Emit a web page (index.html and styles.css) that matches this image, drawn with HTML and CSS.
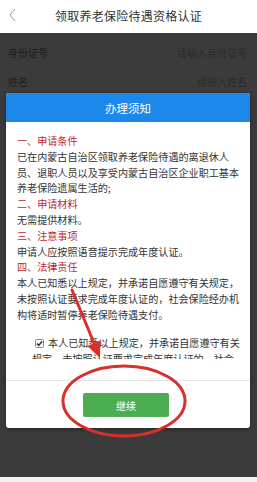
FILE: index.html
```html
<!DOCTYPE html>
<html lang="zh">
<head>
<meta charset="utf-8">
<link rel="stylesheet" href="styles.css">
</head>
<body>
<div class="page">
  <header class="topbar">
    <span class="back">
      <svg width="7" height="14" viewBox="0 0 7 14"><path d="M6 1 L1 7 L6 13" fill="none" stroke="#9a9a9a" stroke-width="1"/></svg>
    </span>
    <h1 class="title">领取养老保险待遇资格认证</h1>
    <span></span>
  </header>

  <main class="screen">
    <div class="row"><span class="label">身份证号</span><span class="ph">请输入身份证号</span></div>
    <div class="row"><span class="label">姓名</span><span class="ph">请输入姓名</span></div>

    <section class="modal">
      <div class="modal-head">办理须知</div>
      <div class="modal-body">
        <p class="h">一、申请条件</p>
        <p>已在内蒙古自治区领取养老保险待遇的离退休人<br>员、退职人员以及享受内蒙古自治区企业职工基本<br>养老保险遗属生活的;</p>
        <p class="h">二、申请材料</p>
        <p>无需提供材料。</p>
        <p class="h">三、注意事项</p>
        <p>申请人应按照语音提示完成年度认证。</p>
        <p class="h">四、法律责任</p>
        <p>本人已知悉以上规定，并承诺自愿遵守有关规定，<br>未按照认证要求完成年度认证的，社会保险经办机<br>构将适时暂停养老保险待遇支付。</p>
        <p class="agree"><span class="cb"><svg width="9" height="9" viewBox="0 0 9 9"><rect x="0.5" y="0.5" width="8" height="8" rx="1" fill="#fff" stroke="#8a8a8a"/><path d="M2 4.6 L3.8 6.4 L7.2 2.2" fill="none" stroke="#333" stroke-width="1.5"/></svg></span>本人已知悉以上规定，并承诺自愿遵守有关<br>规定，未按照认证要求完成年度认证的，社会</p>
      </div>
      <div class="modal-foot">
        <button class="btn">继续</button>
      </div>
    </section>
  </main>
  <div class="bottom"></div>

  <svg class="mark" width="257" height="482" viewBox="0 0 257 482">
    <line x1="72" y1="290" x2="94" y2="343" stroke="#d8312b" stroke-width="3" stroke-linecap="round"/>
    <polygon points="100,358 87.4,345.9 100.4,340.5" fill="#d8312b"/>
    <ellipse cx="124" cy="401" rx="61" ry="35" fill="none" stroke="#d8312b" stroke-width="3"/>
  </svg>
</div>
</body>
</html>
```

FILE: styles.css
```css
* { box-sizing: border-box; margin: 0; padding: 0; }
html, body { width: 257px; height: 482px; overflow: hidden; }
body {
  font-family: "Noto Sans CJK SC", "Noto Sans", sans-serif;
  background: #f2f2f2;
}
.page { position: relative; width: 257px; height: 482px; }

.topbar {
  height: 33px;
  background: #fff;
  display: grid;
  grid-template-columns: 30px 1fr 30px;
  align-items: center;
}
.back { display: flex; padding-left: 9px; padding-bottom: 3px; }
.title {
  font-size: 12px;
  letter-spacing: 0.25px;
  font-weight: normal;
  color: #333;
  text-align: center;
  padding-bottom: 3px;
}

.screen {
  position: relative;
  height: 444px;
  background: #3b3b3b;
  padding-top: 5px;
}
.row {
  height: 29px;
  padding: 0 10px 0 8px;
  display: flex;
  justify-content: space-between;
  align-items: center;
  font-size: 10px;
}
.label { color: #1e1e1e; }
.ph { color: #2c2c2c; }

.modal {
  position: absolute;
  left: 6px;
  top: 60px;
  width: 244px;
  background: #fff;
  border-radius: 3px;
  overflow: hidden;
  box-shadow: 0 1px 4px rgba(0,0,0,0.4);
}
.modal-head {
  height: 29px;
  background: #1b88ea;
  color: #fff;
  font-size: 11.5px;
  display: flex;
  align-items: center;
  justify-content: center;
}
.modal-body {
  height: 237px;
  overflow: hidden;
  padding: 11px 8px 0 11px;
  font-size: 10.1px;
  line-height: 15.8px;
  color: #333;
  white-space: nowrap;
}
.modal-body .h { color: #c0282d; }
.agree { margin-top: 12.5px; padding-left: 15px; }
.cb { display: inline-block; width: 9px; height: 9px; margin: 0 4px 0 3px; vertical-align: -1px; }
.cb svg { display: block; }

.modal-foot {
  margin-top: 21px;
  border-top: 1px solid #e6e6e6;
  padding: 12px 0 11px;
  display: flex;
  justify-content: center;
}
.btn {
  width: 86px;
  height: 24px;
  border: none;
  border-radius: 2px;
  background: #4cae50;
  color: #fff;
  font-family: inherit;
  font-size: 10px;
  margin-left: -4px;
}
.bottom { height: 5px; background: #f2f2f2; }

.mark { position: absolute; left: 0; top: 0; pointer-events: none; }
```
